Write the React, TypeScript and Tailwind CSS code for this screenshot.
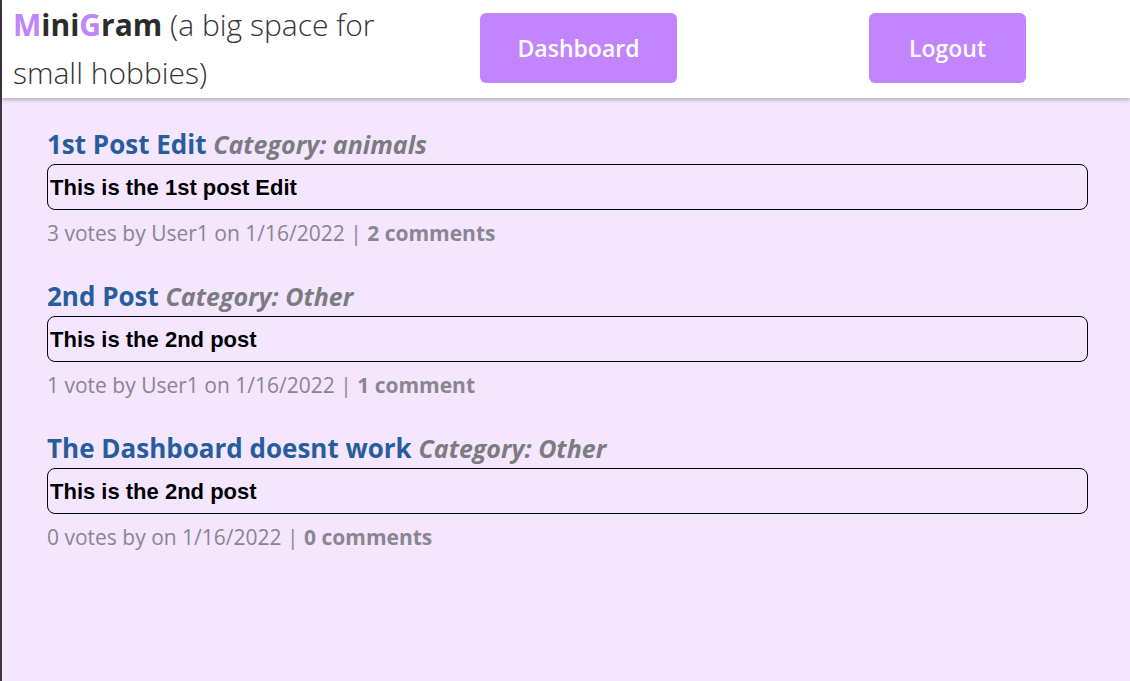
import React from "react";

const posts = [
  { title: "1st Post Edit", category: "animals", body: "This is the 1st post Edit", meta: "3 votes by User1 on 1/16/2022 | ", comments: "2 comments" },
  { title: "2nd Post", category: "Other", body: "This is the 2nd post", meta: "1 vote by User1 on 1/16/2022 | ", comments: "1 comment" },
  { title: "The Dashboard doesnt work", category: "Other", body: "This is the 2nd post", meta: "0 votes by on 1/16/2022 | ", comments: "0 comments" },
];

export default function App() {
  return (
    <div className="min-h-[681px] bg-[#f4e6fe] border-l-2 border-[#3b3640]" style={{ fontFamily: '"Open Sans", "Noto Sans", sans-serif' }}>
      <header className="h-[98px] bg-white flex items-start shadow-[0_2px_4px_rgba(0,0,0,0.25)] relative">
        <div className="w-[400px] pl-[11px] pt-[1px] text-[30px] leading-[48px] text-[#333] font-light">
          <span className="font-bold text-[#2b2b2b]"><span className="text-[#c084fc]">M</span>ini<span className="text-[#c084fc]">G</span>ram</span> (a big space for small hobbies)
        </div>
        <button className="ml-[78px] mt-[13px] w-[197px] h-[70px] rounded-[6px] bg-[#c285fd] text-white text-[23px] font-semibold">Dashboard</button>
        <button className="ml-[192px] mt-[13px] w-[157px] h-[70px] rounded-[6px] bg-[#c285fd] text-white text-[23px] font-semibold">Logout</button>
      </header>
      <main className="pl-[45px] pr-[42px] pt-[31px] flex flex-col gap-[33px]">
        {posts.map((p, i) => (
          <div key={i} className="flex flex-col">
            <div className="text-[26px] leading-[30px] font-bold text-[#275d9c]">
              {p.title} <span className="italic text-[#7b7b80] text-[25px]">Category: {p.category}</span>
            </div>
            <div className="mt-[5px] h-[46px] border border-black rounded-[8px] px-[2px] flex items-center text-black text-[22px] font-bold" style={{ fontFamily: '"Liberation Sans", Arial, sans-serif' }}>
              {p.body}
            </div>
            <div className="mt-[8px] text-[21px] leading-[30px] text-[#8a8590]">
              {p.meta}<span className="font-bold">{p.comments}</span>
            </div>
          </div>
        ))}
      </main>
    </div>
  );
}
